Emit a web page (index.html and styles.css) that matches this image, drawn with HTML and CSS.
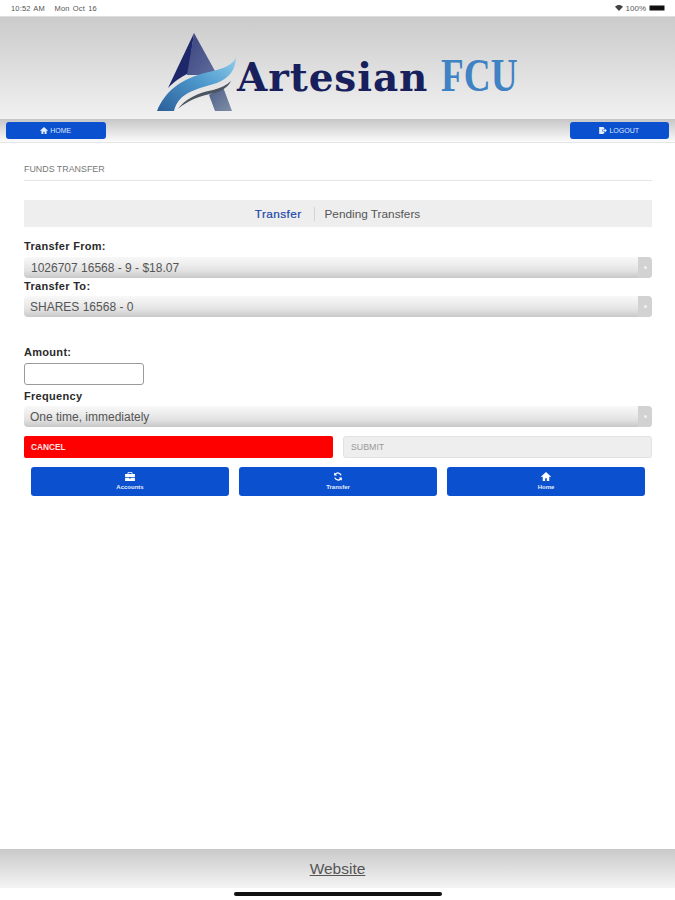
FILE: index.html
```html
<!DOCTYPE html>
<html lang="en">
<head>
<meta charset="utf-8">
<title>Artesian FCU - Funds Transfer</title>
<link rel="stylesheet" href="styles.css">
</head>
<body>
<div class="status">
  <span class="status-left">10:52 AM&nbsp;&nbsp; Mon Oct 16</span>
  <span class="status-right">
    <svg class="wifi" viewBox="0 0 12 9"><path d="M6 9 0 2.600C3.500-.8 8.500-.8 12 2.600Z"/></svg>
    <span>100%</span>
    <span class="battery"><span class="battery-fill"></span></span>
  </span>
</div>
<header class="header">
  <svg class="logo-mark" viewBox="0 0 80 78">
    <defs>
      <linearGradient id="swoosh" x1="0" y1="1" x2="1" y2="0">
        <stop offset="0" stop-color="#2c5f9a"/>
        <stop offset=".55" stop-color="#4d98cc"/>
        <stop offset="1" stop-color="#8fcdec"/>
      </linearGradient>
      <linearGradient id="legr" x1="0" y1="0" x2="1" y2="1">
        <stop offset="0" stop-color="#3b437f"/>
        <stop offset="1" stop-color="#5d6c9c"/>
      </linearGradient>
      <linearGradient id="legb" x1="0" y1="0" x2="1" y2="1">
        <stop offset="0" stop-color="#4d5c88"/>
        <stop offset="1" stop-color="#7f8fa6"/>
      </linearGradient>
    </defs>
    <path d="M37 0 11 55C18 48 24 44 30 41L40 38 34 22Z" fill="#1e2769"/>
    <path d="M37 0 30 42H44L58 38Z" fill="url(#legr)"/>
    <path d="M52 62 66 54 75 78H58Z" fill="url(#legb)"/>
    <path d="M0 78C8 58 24 47 44 41 60 37 73 35 79 25 78 38 72 45 60 50 42 56 22 58 17 78Z" fill="url(#swoosh)"/>
    <path d="M21 76C28 66 40 60 56 57 64 55 70 52 74 48 71 54 65 58 57 60 43 63 31 67 21 76Z" fill="#4b5560"/>
  </svg>
  <div class="logo-text"><span class="logo-a">Artesian</span><span class="logo-b">FCU</span></div>
</header>
<nav class="nav">
  <a class="nav-btn">
    <svg class="nav-icon" viewBox="0 0 12 11"><path d="M6 0 0 5.500 1 6.500 2 5.600V11H5V7.500H7V11H10V5.600L11 6.500 12 5.500Z"/></svg>HOME
  </a>
  <a class="nav-btn">
    <svg class="nav-icon" viewBox="0 0 12 11"><path d="M0 0H6L8 1V4H5V7H8V10L6 11H0Z"/><path d="M6 4.500H9V2.500L12 5.500 9 8.500V6.500H6Z"/></svg>LOGOUT
  </a>
</nav>
<main class="main">
  <h1 class="page-title">FUNDS TRANSFER</h1>
  <div class="tabs">
    <span class="tab tab-active">Transfer</span>
    <span class="tab-sep"></span>
    <span class="tab">Pending Transfers</span>
  </div>
  <label class="label label-from">Transfer From:</label>
  <div class="select select-indent"><span>1026707 16568 - 9 - $18.07</span><span class="select-arrow"><i></i></span></div>
  <label class="label label-to">Transfer To:</label>
  <div class="select"><span>SHARES 16568 - 0</span><span class="select-arrow"><i></i></span></div>
  <label class="label label-amount">Amount:</label>
  <div class="input"></div>
  <label class="label label-freq">Frequency</label>
  <div class="select"><span>One time, immediately</span><span class="select-arrow"><i></i></span></div>
  <div class="actions">
    <a class="action action-cancel">CANCEL</a>
    <a class="action action-submit">SUBMIT</a>
  </div>
  <div class="quick">
    <a class="quick-btn">
      <svg class="quick-icon" viewBox="0 0 12 11"><path d="M4 0H8L9 1V2.500H12V6H0V2.500H3V1ZM4 1V2.500H8V1ZM0 7H5V8H7V7H12V11H0Z"/></svg>
      Accounts
    </a>
    <a class="quick-btn">
      <svg class="quick-icon" viewBox="0 0 12 12"><path d="M10.200 4.500A4.500 4.500 0 0 0 2.400 3" fill="none" stroke="#fff" stroke-width="1.700"/><path d="M0.800 0.500V4.800H5Z"/><path d="M1.800 7.500A4.500 4.500 0 0 0 9.600 9" fill="none" stroke="#fff" stroke-width="1.700"/><path d="M11.200 11.500V7.200H7Z"/></svg>
      Transfer
    </a>
    <a class="quick-btn">
      <svg class="quick-icon" viewBox="0 0 12 11"><path d="M6 0 0 5.500 1 6.500 2 5.600V11H5V7.500H7V11H10V5.600L11 6.500 12 5.500Z"/></svg>
      Home
    </a>
  </div>
</main>
<footer class="footer"><a class="footer-link">Website</a></footer>
<div class="home-strip"><span class="home-bar"></span></div>
</body>
</html>
```
FILE: styles.css
```css
* { box-sizing: border-box; }
html, body { margin: 0; padding: 0; }
body {
  width: 675px;
  height: 900px;
  overflow: hidden;
  display: flex;
  flex-direction: column;
  background: #fff;
  font-family: "Liberation Sans", Arial, sans-serif;
  color: #222;
}
.status {
  height: 17px;
  display: flex;
  justify-content: space-between;
  align-items: center;
  padding: 0 10px 0 11px;
  font-size: 7px;
  color: #555;
  border-bottom: 1px solid #ddd;
}
.status-left { font-size: 7.500px; letter-spacing: .15px; word-spacing: 1px; }
.status-right { display: flex; align-items: center; gap: 3px; font-size: 8px; }
.wifi { width: 8px; height: 6px; fill: #444; }
.battery {
  width: 16px;
  height: 6px;
  display: block;
  border: 1px solid #888;
  border-radius: 1px;
}
.battery-fill { display: block; height: 100%; background: #111; }
.header {
  height: 102px;
  flex: none;
  display: flex;
  justify-content: center;
  align-items: flex-start;
  padding-top: 16px;
  background: linear-gradient(#cbcbcb, #f1f1f1);
}
.logo-mark { width: 80px; height: 78px; flex: none; }
.logo-text {
  margin-top: 16px;
  display: flex;
  align-items: baseline;
  font-weight: 700;
  line-height: 54px;
  white-space: pre;
}
.logo-a {
  font-family: "DejaVu Serif", serif;
  font-size: 39px;
  letter-spacing: .9px;
  color: #171f5c;
}
.logo-b {
  display: inline-block;
  margin: 0 -18px 0 13px;
  font-family: "Liberation Serif", serif;
  font-size: 46px;
  color: #3f83c4;
  transform: scaleX(.81);
  transform-origin: left center;
}
.nav {
  height: 24px;
  flex: none;
  display: flex;
  justify-content: space-between;
  padding: 3px 6px 0;
  background: linear-gradient(#c6c6c6, #fbfbfb);
  border-bottom: 1px solid #e6e6e6;
}
.nav-btn {
  width: 99.500px;
  height: 17px;
  display: flex;
  justify-content: center;
  align-items: center;
  gap: 2px;
  border-radius: 3px;
  background: #0a50cf;
  color: #dbe6fa;
  font-size: 7px;
}
.nav-icon { width: 8px; height: 7px; fill: #e6eefc; }
.main { padding: 0 23px 0 24px; display: flex; flex-direction: column; }
.page-title {
  margin: 20px 0 0;
  padding-bottom: 5px;
  font-size: 8.900px;
  line-height: 12px;
  font-weight: 400;
  color: #777;
  border-bottom: 1px solid #e6e6e6;
}
.tabs {
  margin-top: 19px;
  height: 27px;
  display: flex;
  justify-content: center;
  align-items: center;
  background: #eee;
  font-size: 11.800px;
  padding-right: 1px;
}
.tab { color: #555; }
.tab-active { color: #1b48a8; letter-spacing: .4px; -webkit-text-stroke: .2px #1b48a8; }
.tab-sep { width: 1px; height: 14px; margin: 0 9px 0 13px; background: #d4d4d4; }
.label {
  display: block;
  font-size: 11px;
  line-height: 12px;
  font-weight: 700;
  color: #2a2a2a;
  letter-spacing: .3px;
}
.label-from { margin: 13px 0 5px; }
.label-to { margin: 2px 0 4px; }
.label-amount { margin: 29px 0 5px; }
.label-freq { margin: 5px 0 4px; }
.select {
  height: 21px;
  display: flex;
  justify-content: space-between;
  align-items: center;
  padding-left: 6px;
  border-radius: 4px;
  font-size: 12px;
  color: #555;
  background: linear-gradient(#f8f8f8 0, #efefef 30%, #e2e2e2 65%, #c8c8c8 100%);
}
.select-indent { padding-left: 7px; }
.select-arrow {
  width: 14px;
  height: 100%;
  display: flex;
  justify-content: center;
  align-items: center;
  background: #d2d2d2;
  border-radius: 0 4px 4px 0;
}
.select-arrow i { width: 3px; height: 3px; border-radius: 50%; background: #f0f0f0; }
.input {
  width: 120px;
  height: 22px;
  background: #fff;
  border: 1px solid #9a9a9a;
  border-radius: 3px;
}
.actions { margin-top: 9px; display: grid; grid-template-columns: 1fr 1fr; gap: 10px; }
.action {
  height: 22px;
  display: flex;
  align-items: center;
  padding-left: 7px;
  font-size: 8.800px;
  border-radius: 2px;
}
.action-cancel { background: #fe0000; color: #ffe6e6; font-size: 8.300px; font-weight: 700; }
.action-submit { background: #eee; color: #999; border: 1px solid #e2e2e2; border-radius: 3px; }
.quick {
  margin-top: 9px;
  padding: 0 7px;
  display: grid;
  grid-template-columns: repeat(3, 1fr);
  gap: 10px;
}
.quick-btn {
  height: 29px;
  display: flex;
  flex-direction: column;
  align-items: center;
  justify-content: flex-start;
  gap: 3px;
  padding-top: 5px;
  border-radius: 3px;
  background: #0a50cf;
  color: #e6eefc;
  font-size: 6px;
  line-height: 7px;
  font-weight: 700;
}
.quick-icon { width: 10px; height: 9px; fill: #fff; }
.footer {
  margin-top: auto;
  height: 39px;
  flex: none;
  display: flex;
  justify-content: center;
  align-items: center;
  background: linear-gradient(#c9c9c9, #f4f4f4);
}
.footer-link { font-size: 15.500px; color: #555; text-decoration: underline; }
.home-strip {
  height: 12px;
  flex: none;
  display: flex;
  justify-content: center;
  padding-top: 4px;
}
.home-bar { width: 208px; height: 3.500px; background: #111; border-radius: 2px; }
```
